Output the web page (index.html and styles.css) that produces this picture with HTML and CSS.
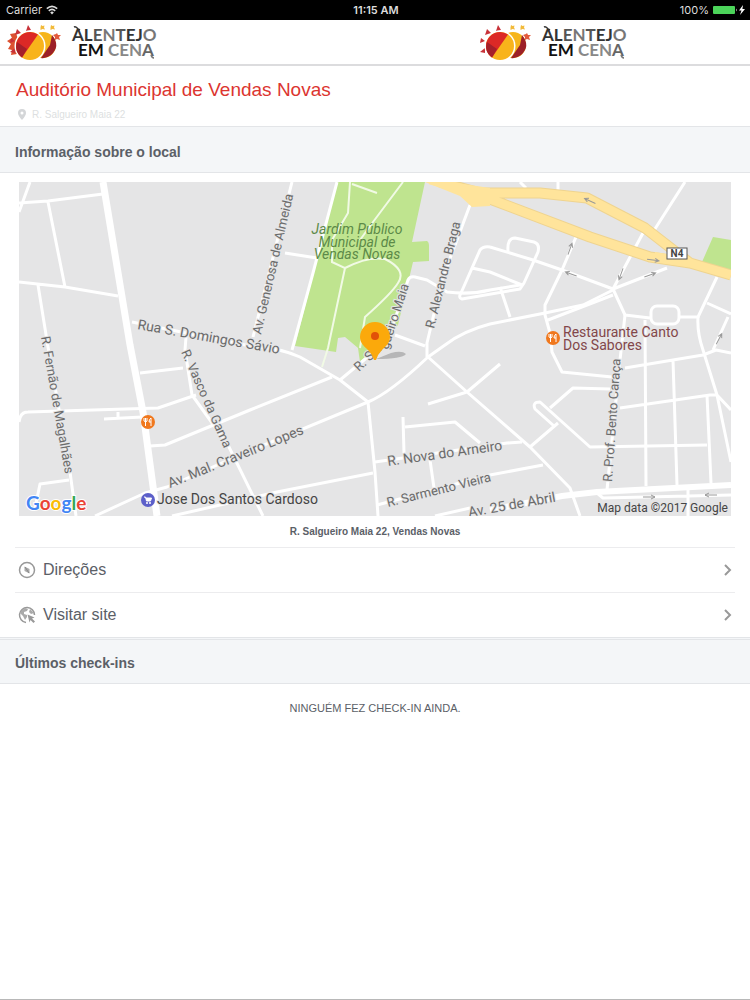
FILE: index.html
```html
<!DOCTYPE html>
<html lang="pt">
<head>
    <meta charset="UTF-8">
    <meta name="viewport" content="width=device-width, initial-scale=1.0">
    <title>Auditório Municipal de Vendas Novas</title>
    <link rel="stylesheet" href="styles.css">
</head>
<body>
    <div class="statusbar">
        <span class="carrier">Carrier
            <svg width="12" height="10" viewBox="0 0 12 10" fill="none" stroke="#ddd" stroke-width="1.6"><path d="M.8 3.6Q6-1 11.2 3.6M2.8 5.8Q6 3 9.2 5.8"/><path d="M4.2 7.4Q6 5.8 7.8 7.4L6 9.4Z" fill="#ddd" stroke="none"/></svg>
        </span>
        <span class="time">11:15 AM</span>
        <span class="battery">100%
            <svg width="33" height="10" viewBox="0 0 33 10"><rect x="0" y="1" width="22" height="8" rx="1" fill="#4cd45a"/><path d="M23 3.5q2 1.5 0 3z" fill="#999"/><path d="M30 0l-4 5.5h2.5L27 10l5-6h-2.6z" fill="#fff"/></svg>
        </span>
    </div>

    <header class="brandbar">
        <svg class="logo" viewBox="0 0 160 42" role="img" aria-label="Alentejo em Cena">
            <path d="M16 11l-6 1 2 4-5 3 4 3-3 5 4 1-1 5 6-1 2-12z" fill="#dc5131"/>
            <g id="logo">
                <path d="M26 9l2-6 3 5zM15 13l2-6 4 4zM10 21l1-5 4 3zM10 30l5-4v5z" fill="#c83239"/>
                <circle cx="43" cy="23" r="13" fill="#f6b51b"/>
                <path d="M52 13q9 11-1 20-5 4-10 3l9-13z" fill="#9c2028"/>
                <circle cx="30" cy="24" r="15.5" fill="#fff"/>
                <circle cx="30" cy="24" r="14" fill="#f8b31b"/>
                <path d="M38 12.5A14 14 0 0 0 22 35.5z" fill="#dc2926"/>
                <path d="M17 20Q14 30 22 35.5L27 27z" fill="#a51f2a"/>
                <path d="M41 3l1.5 1 2-.5-.5 2 1 2-2.5-.5-2 1V5.5zM51 3l1.5 1 2-.5-.5 2 1 2-2.5-.5-2 1V5.5z" fill="#f2ba3a"/>
                <path d="M57 11l1 2h3l-2 2 1 3-3-1-2 1v-3l-2-2 3-1z" fill="#e3593c"/>
                <text class="logo-text" x="72" y="19"><tspan fill="#333">AL</tspan><tspan fill="#555">E</tspan><tspan fill="#777">N</tspan><tspan fill="#555">T</tspan><tspan fill="#333">EJ</tspan><tspan fill="#777">O</tspan></text>
                <path d="M74 5q2-1 4 2l2 1" fill="none" stroke="#333" stroke-width="1.5"/>
                <text class="logo-text" x="78" y="34"><tspan fill="#111">EM</tspan><tspan fill="#888"> CEN</tspan><tspan fill="#666">A</tspan></text>
                <path d="M151 33q1 3 3 3" fill="none" stroke="#777" stroke-width="1.5"/>
            </g>
        </svg>
        <svg class="logo" viewBox="0 0 160 42" role="img" aria-label="Alentejo em Cena"><use href="#logo"/></svg>
    </header>

    <main>
        <div class="place">
            <h1>Auditório Municipal de Vendas Novas</h1>
            <p class="address">
                <svg width="8" height="11" viewBox="0 0 8 11" fill="#d4d6d8"><path fill-rule="evenodd" d="M4 0a4 4 0 0 1 4 4Q8 6.5 4 11 0 6.5 0 4a4 4 0 0 1 4-4zm0 2.5a1.5 1.5 0 1 0 0 3 1.5 1.5 0 0 0 0-3z"/></svg>
                R. Salgueiro Maia 22
            </p>
        </div>

        <h2 class="section-title">Informação sobre o local</h2>

        <div class="location">
            <svg class="map" viewBox="19 182 712 334" role="img" aria-label="Mapa de Vendas Novas">
                <rect x="19" y="182" width="712" height="334" fill="#e5e5e6"/>
                <!-- parks -->
                <path fill="#bfe48f" d="M337 182H425L412 242 427 241Q429 242 429 246V261L413 262 398 325 360 362 358 348 345 337 338 338 336 352 295 346zM702 262L713 237 731 240V274z"/>
                <!-- streets -->
                <g class="streets">
                    <path d="M19 203L48 201 103 194M30 182L19 212M48 202L65 287M19 282L65 287 118 296M38 285L48 347 70 472 76 516"/>
                    <path d="M132 322L255 347Q280 348 300 357L340 380 368 402 375 472 378 516M186 337L185 350 192 395 228 445 263 516"/>
                    <path d="M140 373L183 368M19 422Q20 412 28 412L158 408 196 395M104 419L142 417M118 412V418M150 446L165 445 250 410 332 377"/>
                    <path d="M95 516L145 493 167 487 240 455 368 402Q390 393 428 357L445 345Q463 331 490 324L545 313 583 305 613 290M35 508L40 484 69 480M172 516L277 492 373 473"/>
                    <path d="M375 462L507 443 522 442M377 505L490 475 543 465M428 404L467 392 500 364M428 357L467 392 530 447 570 488 580 516M403 417L404 453M405 427L455 422 480 443M430 460L434 488"/>
                    <path d="M292 182L253 337M285 253L317 258M337 182L313 273 292 350M340 380L370 355Q385 345 393 325L408 280Q410 276 415 277L427 280 447 292Q470 295 490 290L520 285M470 205L442 280 427 343V357M395 335L425 346"/>
                    <path d="M490 247L533 260 562 270 613 289 625 315 650 318M508 251Q507 238 515 238L534 242Q540 244 538 252L524 283 520 289 462 299Q458 298 461 293L480 250Q483 246 490 247M472 268L490 272 522 285M500 287L510 317"/>
                    <path d="M576 237L562 270 545 305V315L550 333 552 352 562 372 612 377M548 320L613 295M643 233L613 289 667 268M685 182L653 232M717 277L698 317H680M707 303L731 314M728 317L713 350"/>
                    <rect x="651" y="306" width="28" height="18" rx="6"/>
                    <path d="M698 317Q697 333 703 350L717 395 731 462M625 368L703 355 716 350 731 353M645 320L646 486M625 315L620 360 607 490M673 360L677 485M620 408L710 395H717L731 410M707 395L711 483"/>
                    <path d="M530 447L558 423M554 426L535 409Q532 402 540 402L590 447 707 445M550 408L573 388 610 389M597 493L603 498 731 495M688 490V516M520 182L526 188M558 182V190M435 516L470 508"/>
                </g>
                <path fill="none" stroke="#fff" stroke-width="7" d="M103 182L130 345 143 412 157 516"/>
                <path fill="none" stroke="#fff" stroke-width="6" d="M490 510L562 496 597 492 731 485"/>
                <!-- park paths -->
                <path fill="none" stroke="#f1fae5" stroke-width="2" d="M350 182L348 213 332 240V262L345 268 328 348 322 367M352 184L377 193M403 182L373 222 360 240M345 268Q368 256 385 259 407 270 398 283 392 293 365 317L360 348"/>
                <!-- N4 -->
                <g fill="none" stroke-linejoin="round">
                    <path stroke="#efd490" stroke-width="11" d="M440 182L480 193 540 193 587 198 645 228 690 263 731 275M470 194L490 199 590 237 650 257 690 263"/>
                    <path stroke="#ffe49b" stroke-width="9" d="M430 180L480 193 540 193 587 198 645 228 690 263 731 275M470 194L490 199 590 237 650 257 690 263"/>
                </g>
                <path fill="#ffe49b" d="M425 182L460 196 472 207 490 206V188L450 182zM655 252L655 262 690 267V258z"/>
                <!-- one-way arrows -->
                <g class="arrows">
                    <path id="arrow" d="M-6 0H6M2-2L6 0 2 2" transform="translate(590 201) rotate(205)"/>
                    <path d="M-6 0H6M2-2L6 0 2 2" transform="translate(653 260) rotate(8)"/>
                    <path d="M-6 0H6M2-2L6 0 2 2" transform="translate(570 249) rotate(-70)"/>
                    <path d="M-6 0H6M2-2L6 0 2 2" transform="translate(571 274) rotate(200)"/>
                    <path d="M-6 0H6M2-2L6 0 2 2" transform="translate(621 274) rotate(110)"/>
                    <path d="M-6 0H6M2-2L6 0 2 2" transform="translate(650 275) rotate(-20)"/>
                    <path d="M-6 0H6M2-2L6 0 2 2" transform="translate(719 339) rotate(-63)"/>
                    <path d="M-6 0H6M2-2L6 0 2 2" transform="translate(649 497)"/>
                    <path d="M-6 0H6M2-2L6 0 2 2" transform="translate(711 495) rotate(180)"/>
                </g>
                <rect x="667" y="248" width="20" height="11" fill="#fff" stroke="#555"/>
                <text class="shield" x="677" y="257">N4</text>

                <!-- street names -->
                <g class="street-names">
                    <text transform="translate(261 335) rotate(-77)">Av. Generosa de Almeida</text>
                    <text class="wide" transform="translate(137 329) rotate(10)">Rua S. Domingos Sávio</text>
                    <text transform="translate(41 337) rotate(80)">R. Fernão de Magalhães</text>
                    <text transform="translate(181 352) rotate(66)">R. Vasco da Gama</text>
                    <text class="wide" transform="translate(170 488) rotate(-22)">Av. Mal. Craveiro Lopes</text>
                    <text transform="translate(359 372) rotate(-44)">R. Sal</text>
                    <text transform="translate(388 350) rotate(-72)">gueiro Maia</text>
                    <text transform="translate(434 329) rotate(-76)">R. Alexandre Braga</text>
                    <text class="wide" transform="translate(388 466) rotate(-8)">R. Nova do Arneiro</text>
                    <text transform="translate(388 507) rotate(-14)">R. Sarmento Vieira</text>
                    <text class="wide" transform="translate(469 517) rotate(-10)">Av. 25 de Abril</text>
                    <text transform="translate(612 482) rotate(-86)">R. Prof. Bento Caraça</text>
                </g>
                <g class="park-name">
                    <text x="357" y="234">Jardim Público</text>
                    <text x="357" y="247">Municipal de</text>
                    <text x="357" y="259">Vendas Novas</text>
                </g>
                <text class="poi food" x="563" y="337">Restaurante Canto</text>
                <text class="poi food" x="563" y="350">Dos Sabores</text>
                <text class="poi" x="157" y="504">Jose Dos Santos Cardoso</text>
                <g id="food">
                    <circle cx="148" cy="422" r="7" fill="#f0781e"/>
                    <path d="M144 418v3q2 2 3 0v-3M145.5 418v8M151 426v-8q-2 1-2 4h2" fill="none" stroke="#fff"/>
                </g>
                <use href="#food" x="405" y="-84"/>
                <circle cx="148" cy="500" r="7" fill="#5c5fc9"/>
                <path d="M144 497h1.5l1 4h4l1-3H146" fill="#fff" stroke="#fff"/>
                <circle cx="147" cy="503" r="1" fill="#fff"/><circle cx="150" cy="503" r="1" fill="#fff"/>

                <!-- marker -->
                <path d="M376 359L391 353Q402 350 406 354 402 359 376 359z" fill="#888" opacity=".5"/>
                <path d="M375 322a15 15 0 0 1 15 15c0 6-4 9-8 13q-4 4-6 10h-2q-2-6-6-10c-4-4-8-7-8-13a15 15 0 0 1 15-15z" fill="#fba90b"/>
                <circle cx="375" cy="336" r="4" fill="#e25208"/>

                <text class="google" x="26" y="510"><tspan fill="#4285f4">G</tspan><tspan fill="#ea4335">o</tspan><tspan fill="#fbbc05">o</tspan><tspan fill="#4285f4">g</tspan><tspan fill="#34a853">l</tspan><tspan fill="#ea4335">e</tspan></text>
                <text class="credit" x="728" y="512">Map data ©2017 Google</text>
            </svg>
            <p class="caption">R. Salgueiro Maia 22, Vendas Novas</p>
        </div>

        <nav class="links">
            <a href="#">
                <svg class="icon" viewBox="0 0 18 18" fill="none" stroke="#999" stroke-width="1.5"><circle cx="9" cy="9" r="7.5"/><path d="M6.5 5.5l5 2.500v4.500l-5-2.500z" fill="#aaa" stroke="none"/><path d="M7 6l4 6" stroke="#888" stroke-width="1"/></svg>
                <span>Direções</span>
                <svg class="chevron" viewBox="0 0 8 12"><path d="M1 1l5 5-5 5"/></svg>
            </a>
            <a href="#">
                <svg class="icon" viewBox="0 0 18 18" fill="none" stroke="#999" stroke-width="1.5"><path d="M8 16.5A7.5 7.5 0 1 1 16.5 9"/><path d="M3 5l4-3 3 1-1 2-3 1v2l3 1v2l-2 3-2-4-3-3zM12 3l4 4-3 1-2-2z" fill="#aaa" stroke="none"/><path d="M9.5 8.5l7 3-2.500 1 3 3-1.500 1.500-3-3-1 2.500z" fill="#999" stroke="none"/></svg>
                <span>Visitar site</span>
                <svg class="chevron" viewBox="0 0 8 12"><path d="M1 1l5 5-5 5"/></svg>
            </a>
        </nav>

        <h2 class="section-title checkins">Últimos check-ins</h2>
        <p class="empty">NINGUÉM FEZ CHECK-IN AINDA.</p>
    </main>
</body>
</html>
```
FILE: styles.css
```css
* {
    box-sizing: border-box;
}
body {
    display: flex;
    flex-direction: column;
    min-height: 100vh;
    margin: 0;
    background: #fff;
    color: #5b6067;
    font-family: "Liberation Sans", Arial, sans-serif;
}
h1, h2, p {
    margin: 0;
    font-weight: normal;
}
.statusbar {
    display: grid;
    grid-template-columns: 1fr auto 1fr;
    align-items: center;
    height: 20px;
    padding: 0 4px 0 6px;
    background: #000;
    color: #ddd;
    font-family: Inter, Arial, sans-serif;
    font-size: 11px;
}
.carrier, .battery {
    display: flex;
    align-items: center;
    gap: 4px;
}
.battery {
    justify-content: flex-end;
}
.time {
    font-weight: 600;
}
.brandbar {
    display: flex;
    gap: 310px;
    height: 46px;
    padding-top: 2px;
    overflow: hidden;
    border-bottom: 2px solid #dcdcde;
}
.logo {
    flex: none;
    width: 160px;
    height: 42px;
}
.logo-text {
    font-family: Lato, sans-serif;
    font-size: 17px;
    font-weight: bold;
}
main {
    flex: 1;
    border-bottom: 1px solid #b8b8b8;
}
.place {
    padding: 13px 16px 5px;
}
.place h1 {
    color: #dc3530;
    font-size: 19px;
    line-height: 22px;
}
.address {
    display: flex;
    align-items: center;
    gap: 6px;
    padding: 7px 2px 0;
    color: #dddfe1;
    font-size: 10px;
    line-height: 13px;
}
.section-title {
    padding: 5px 15px 0;
    border: 1px solid #e3e5e8;
    border-width: 1px 0;
    background: #f4f6f8;
    color: #5b6067;
    font-size: 14px;
    font-weight: bold;
    line-height: 40px;
}
.location {
    padding: 9px 19px 8px;
}
.map {
    display: block;
    width: 100%;
    font-family: Roboto, sans-serif;
}
.streets {
    fill: none;
    stroke: #fff;
    stroke-width: 3;
    stroke-linejoin: round;
}
.arrows {
    fill: none;
    stroke: #999;
}
.shield {
    fill: #444;
    font-size: 10px;
    font-weight: bold;
    text-anchor: middle;
}
.street-names {
    fill: #6b6b6b;
    font-size: 13px;
    stroke: #e5e5e6;
    stroke-width: 2;
    paint-order: stroke;
}
.street-names .wide {
    font-size: 14px;
}
.park-name {
    fill: #5c8a48;
    font-size: 14px;
    font-style: italic;
    text-anchor: middle;
}
.poi {
    fill: #444;
    font-size: 14px;
    stroke: #e5e5e6;
    stroke-width: 2;
    paint-order: stroke;
}
.food {
    fill: #82474a;
}
.google {
    font-family: Lato, sans-serif;
    font-size: 19px;
    font-weight: bold;
    stroke: #fff;
    stroke-width: 2;
    paint-order: stroke;
}
.credit {
    fill: #444;
    font-size: 12px;
    text-anchor: end;
}
.caption {
    padding-top: 9px;
    font-size: 10px;
    font-weight: bold;
    line-height: 14px;
    text-align: center;
}
.links {
    padding: 0 15px;
}
.links a {
    display: flex;
    align-items: center;
    gap: 7px;
    height: 45px;
    padding: 0 3px;
    border-top: 1px solid #ececee;
    color: #5b6067;
    font-size: 16px;
    text-decoration: none;
}
.icon {
    width: 18px;
    height: 18px;
}
.chevron {
    width: 8px;
    height: 12px;
    margin-left: auto;
    fill: none;
    stroke: #999;
    stroke-width: 2;
}
.checkins {
    padding-top: 3px;
    border-top: 3px double #e3e5e8;
}
.empty {
    padding-top: 17px;
    font-size: 11px;
    line-height: 14px;
    text-align: center;
}
```
